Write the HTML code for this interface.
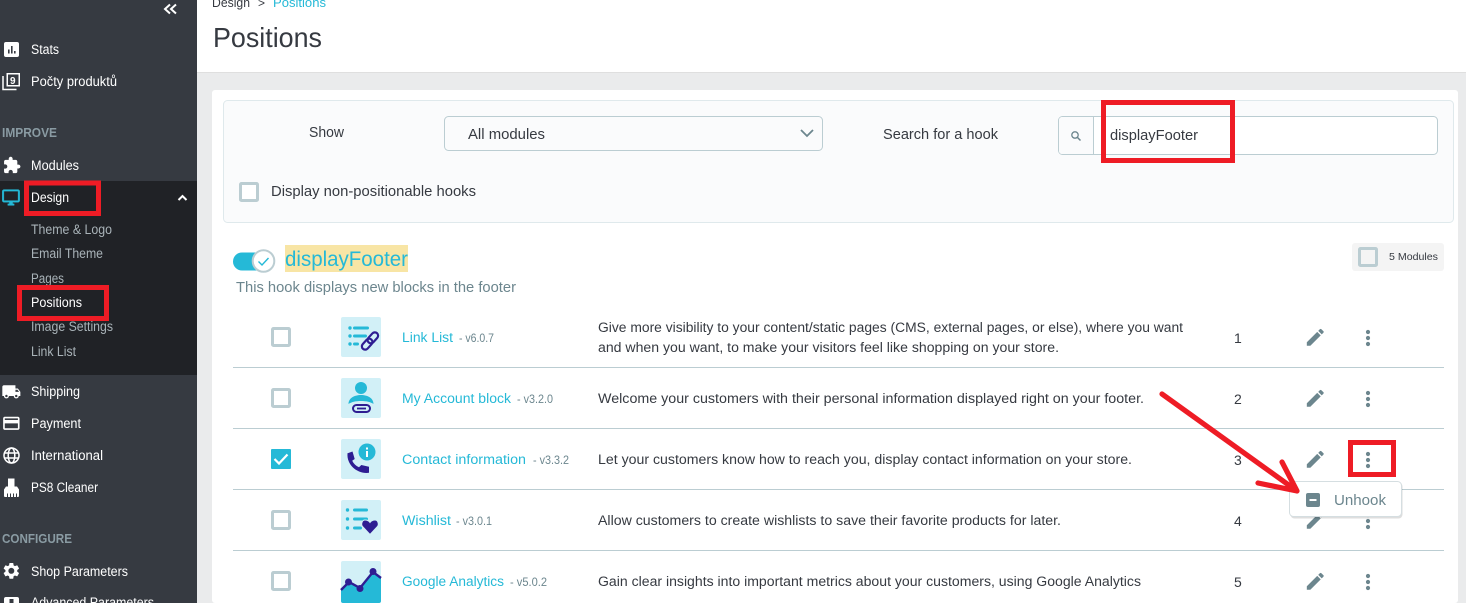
<!DOCTYPE html>
<html><head><meta charset="utf-8"><title>Positions</title>
<style>
html,body{margin:0;padding:0;background:#eaebec;width:1466px;height:603px;overflow:hidden}
svg{display:block;font-family:"Liberation Sans",sans-serif;font-size:13.5px}
.s{fill:#fff}.u{fill:#a9b3b8}.h{fill:#8a9ba3;font-weight:bold;font-size:12.5px}
.d{fill:#363a41}.l{fill:#25b9d7}.v{fill:#6c868e;font-size:11.5px}
.cb{fill:#fff;stroke:#bbcdd2;stroke-width:3}
.r{fill:none;stroke:#ee1c25;stroke-width:5}
.t{fill:#25b9d7}.p{fill:#2e1d92}
</style></head><body>
<svg width="1466" height="603" viewBox="0 0 1466 603" xmlns="http://www.w3.org/2000/svg">
<defs>
<path id="pen" d="M3 17.25V21h3.75L17.81 9.94l-3.75-3.75L3 17.25zM20.71 7.04c.39-.39.39-1.02 0-1.41l-2.34-2.34c-.39-.39-1.02-.39-1.41 0l-1.83 1.83 3.75 3.75 1.83-1.83z"/>
<g id="dots"><circle cx="0" cy="-6" r="2.1"/><circle cx="0" cy="0" r="2.1"/><circle cx="0" cy="6" r="2.1"/></g>
</defs>
<!-- backgrounds -->
<rect x="197" y="0" width="1269" height="72" fill="#fff"/>
<rect x="197" y="72" width="1269" height="1" fill="#dfdfdf"/>
<rect x="212" y="90" width="1246" height="513" rx="3" fill="#fff"/>
<rect x="0" y="0" width="197" height="603" fill="#363a41"/>
<rect x="0" y="181" width="197" height="194" fill="#202226"/>

<!-- sidebar chrome -->
<path d="M170 4.5l-5 4.5 5 4.5M176 4.5l-5 4.5 5 4.5" fill="none" stroke="#fff" stroke-width="2"/>
<path d="M178.5 200l4-4 4 4" fill="none" stroke="#fff" stroke-width="2"/>
<!-- stats -->
<rect x="4" y="42" width="15" height="15" rx="2" fill="#fff"/>
<path d="M8 49.5h1.600v4H8zM11 46h1.600v7.500H11zM14 51h1.600v2.500H14z" fill="#363a41"/>
<!-- filter 9 -->
<path d="M3 76v13.500h13.500" fill="none" stroke="#fff" stroke-width="1.500"/>
<rect x="6.500" y="73" width="13.500" height="13.500" fill="#fff"/>
<rect x="8" y="74.500" width="10.500" height="10.500" fill="#363a41"/>
<text x="10" y="84" font-size="10" font-weight="bold" fill="#fff">9</text>
<!-- puzzle -->
<path transform="translate(2.500 156) scale(.78)" fill="#fff" d="M20.500 11H19V7c0-1.100-.9-2-2-2h-4V3.500C13 2.120 11.880 1 10.500 1S8 2.120 8 3.500V5H4c-1.100 0-1.990.9-1.990 2v3.800H3.500c1.490 0 2.700 1.210 2.700 2.700s-1.210 2.700-2.700 2.700H2V20c0 1.100.9 2 2 2h3.800v-1.500c0-1.490 1.210-2.700 2.700-2.700 1.490 0 2.700 1.210 2.700 2.700V22H17c1.100 0 2-.9 2-2v-4h1.500c1.380 0 2.500-1.120 2.500-2.500S21.880 11 20.500 11z"/>
<!-- desktop -->
<path transform="translate(1.500 188) scale(.79)" fill="#25b9d7" stroke="#25b9d7" stroke-width=".5" d="M21 2H3c-1.100 0-2 .9-2 2v12c0 1.100.9 2 2 2h7v2H8v2h8v-2h-2v-2h7c1.100 0 2-.9 2-2V4c0-1.100-.9-2-2-2zm0 14H3V4h18v12z"/>
<!-- shipping -->
<path transform="translate(1.500 382) scale(.82)" fill="#fff" d="M20 8h-3V4H3c-1.100 0-2 .9-2 2v11h2c0 1.660 1.340 3 3 3s3-1.340 3-3h6c0 1.660 1.340 3 3 3s3-1.340 3-3h2v-5l-3-4zM6 18.500c-.83 0-1.500-.67-1.500-1.500s.67-1.500 1.500-1.500 1.500.67 1.500 1.500-.67 1.500-1.500 1.500zm13.500-9l1.960 2.500H17V9.500h2.500zm-1.500 9c-.83 0-1.500-.67-1.500-1.500s.67-1.500 1.500-1.500 1.500.67 1.500 1.500-.67 1.500-1.500 1.500z"/>
<!-- payment -->
<path transform="translate(1.500 413.500) scale(.82)" fill="#fff" d="M20 4H4c-1.110 0-1.990.89-1.990 2L2 18c0 1.110.89 2 2 2h16c1.110 0 2-.89 2-2V6c0-1.110-.89-2-2-2zm0 14H4v-6h16v6zm0-10H4V6h16v2z"/>
<!-- globe -->
<g fill="none" stroke="#fff" stroke-width="1.500"><circle cx="11.500" cy="455.500" r="7.500"/><ellipse cx="11.500" cy="455.500" rx="3.300" ry="7.500"/><path d="M4.500 453h14M4.500 458h14"/></g>
<!-- brush -->
<path d="M8 478.500h6.500v8h2.500l2 3v6.500a1 1 0 0 1-1 1H5a1 1 0 0 1-1-1v-6.500l2-3h2z" fill="#fff"/>
<path d="M7.500 497v-3.500M10.500 497v-3.500M13.500 497v-3.500M16.500 497v-3.500" stroke="#363a41" stroke-width="1"/>
<!-- gear -->
<path transform="translate(1.500 561) scale(.82)" fill="#fff" d="M19.140 12.940c.04-.3.06-.61.06-.94 0-.32-.02-.64-.07-.94l2.030-1.580c.18-.14.23-.41.12-.61l-1.920-3.320c-.12-.22-.37-.29-.59-.22l-2.390.96c-.5-.38-1.030-.7-1.620-.94l-.36-2.540c-.04-.24-.24-.41-.48-.41h-3.840c-.24 0-.43.17-.47.41l-.36 2.540c-.59.24-1.130.57-1.620.94l-2.390-.96c-.22-.08-.47 0-.59.22L2.740 8.870c-.12.21-.08.47.12.61l2.030 1.580c-.05.3-.09.63-.09.94s.02.64.07.94l-2.030 1.580c-.18.14-.23.41-.12.61l1.920 3.320c.12.22.37.29.59.22l2.390-.96c.5.38 1.030.7 1.620.94l.36 2.540c.05.24.24.41.48.41h3.840c.24 0 .44-.17.47-.41l.36-2.540c.59-.24 1.130-.56 1.620-.94l2.390.96c.22.08.47 0 .59-.22l1.920-3.320c.12-.22.07-.47-.12-.61l-2.010-1.580zM12 15.600c-1.980 0-3.600-1.620-3.600-3.600s1.620-3.600 3.600-3.600 3.600 1.620 3.600 3.600-1.620 3.600-3.600 3.600z"/>
<rect x="4" y="597" width="15" height="12" rx="2" fill="#fff"/>
<rect x="9.500" y="599" width="4" height="4" fill="#363a41"/>

<!-- sidebar text -->
<text class="s" x="31" y="54" textLength="28" lengthAdjust="spacingAndGlyphs">Stats</text>
<text class="s" x="31" y="86" textLength="86" lengthAdjust="spacingAndGlyphs">Počty produktů</text>
<text class="h" x="2" y="137" textLength="55" lengthAdjust="spacingAndGlyphs">IMPROVE</text>
<text class="s" x="31" y="170" textLength="48" lengthAdjust="spacingAndGlyphs">Modules</text>
<text class="s" x="31" y="202" textLength="38" lengthAdjust="spacingAndGlyphs">Design</text>
<text class="u" x="31" y="234" textLength="81" lengthAdjust="spacingAndGlyphs">Theme &amp; Logo</text>
<text class="u" x="31" y="258" textLength="72" lengthAdjust="spacingAndGlyphs">Email Theme</text>
<text class="u" x="31" y="283" textLength="33" lengthAdjust="spacingAndGlyphs">Pages</text>
<text class="s" x="31" y="307" textLength="51" lengthAdjust="spacingAndGlyphs">Positions</text>
<text class="u" x="31" y="331" textLength="82" lengthAdjust="spacingAndGlyphs">Image Settings</text>
<text class="u" x="31" y="356" textLength="45" lengthAdjust="spacingAndGlyphs">Link List</text>
<text class="s" x="31" y="396" textLength="49" lengthAdjust="spacingAndGlyphs">Shipping</text>
<text class="s" x="31" y="428" textLength="50" lengthAdjust="spacingAndGlyphs">Payment</text>
<text class="s" x="31" y="460" textLength="72" lengthAdjust="spacingAndGlyphs">International</text>
<text class="s" x="31" y="492" textLength="67" lengthAdjust="spacingAndGlyphs">PS8 Cleaner</text>
<text class="h" x="2" y="543" textLength="70" lengthAdjust="spacingAndGlyphs">CONFIGURE</text>
<text class="s" x="31" y="576" textLength="97" lengthAdjust="spacingAndGlyphs">Shop Parameters</text>
<text class="s" x="31" y="607" textLength="123" lengthAdjust="spacingAndGlyphs">Advanced Parameters</text>

<!-- header -->
<text class="d" x="212" y="7" font-size="12.500" textLength="38" lengthAdjust="spacingAndGlyphs">Design</text>
<text class="d" x="258" y="7" font-size="12">&gt;</text>
<text class="l" x="273" y="7" font-size="12.500" textLength="53" lengthAdjust="spacingAndGlyphs">Positions</text>
<text class="d" x="213" y="47" font-size="28" textLength="109" lengthAdjust="spacingAndGlyphs">Positions</text>

<!-- filter panel -->
<rect x="223.500" y="100.500" width="1230" height="122" rx="4" fill="#fafbfc" stroke="#dfe9ec"/>
<text class="d" x="309" y="137" font-size="14.500" textLength="35" lengthAdjust="spacingAndGlyphs">Show</text>
<rect x="444.500" y="116.500" width="378" height="34" rx="4" fill="#fafbfc" stroke="#bbcdd2"/>
<text class="d" x="468" y="139" font-size="14.500" textLength="77" lengthAdjust="spacingAndGlyphs">All modules</text>
<path d="M801 130l6 6 6-6" fill="none" stroke="#6c868e" stroke-width="1.800"/>
<text class="d" x="883" y="139" font-size="14.500" textLength="115" lengthAdjust="spacingAndGlyphs">Search for a hook</text>
<rect x="1058.500" y="116.500" width="379" height="38" rx="4" fill="#fff" stroke="#bbcdd2"/>
<path d="M1059 120a3 3 0 0 1 3-3h31v37h-31a3 3 0 0 1-3-3z" fill="#fafbfc"/>
<path d="M1093.500 117v37" stroke="#bbcdd2"/>
<circle cx="1075" cy="135" r="3.200" fill="none" stroke="#6c868e" stroke-width="1.300"/>
<path d="M1077.500 137.500l3 3" stroke="#6c868e" stroke-width="1.500"/>
<text class="d" x="1110" y="140" font-size="14.500" textLength="88" lengthAdjust="spacingAndGlyphs">displayFooter</text>
<rect class="cb" x="240.500" y="183.500" width="17" height="17" rx="1"/>
<text class="d" x="271" y="196" font-size="14.500" textLength="205" lengthAdjust="spacingAndGlyphs">Display non-positionable hooks</text>

<!-- hook header -->
<rect x="233" y="252.500" width="36" height="18" rx="9" fill="#25b9d7"/>
<circle cx="263.500" cy="261" r="10.800" fill="#fff" stroke="#bbcdd2" stroke-width="2"/>
<path d="M258.500 261.500l3.500 3.500 6.500-7" fill="none" stroke="#25b9d7" stroke-width="1.400"/>
<rect x="285" y="245" width="123" height="27" fill="#f8e5a5"/>
<text class="l" x="285" y="266" font-size="21.500" textLength="123" lengthAdjust="spacingAndGlyphs">displayFooter</text>
<text x="236" y="292" font-size="14.500" fill="#6c868e" textLength="280" lengthAdjust="spacingAndGlyphs">This hook displays new blocks in the footer</text>
<rect x="1352" y="243" width="92" height="28" rx="3" fill="#f4f4f4"/>
<rect x="1359.500" y="248.500" width="17" height="17" rx="1" fill="#f4f4f4" stroke="#bbcdd2" stroke-width="3"/>
<text class="d" x="1389" y="260" font-size="10.500" textLength="49" lengthAdjust="spacingAndGlyphs">5 Modules</text>

<!-- separators -->
<path d="M233 367.500h1211M233 428.500h1211M233 489.500h1211M233 550.500h1211" stroke="#bbcdd2"/>

<!-- checkboxes -->
<rect class="cb" x="272.500" y="328.500" width="17" height="17" rx="1"/>
<rect class="cb" x="272.500" y="389.500" width="17" height="17" rx="1"/>
<rect x="271" y="449" width="20" height="20" rx="1" fill="#25b9d7"/>
<path d="M274.500 459l4.500 4.500 8.500-9" fill="none" stroke="#fff" stroke-width="2.200"/>
<rect class="cb" x="272.500" y="511.500" width="17" height="17" rx="1"/>
<rect class="cb" x="272.500" y="572.500" width="17" height="17" rx="1"/>

<!-- module icons -->
<rect x="341" y="317" width="40" height="40" rx="2" fill="#d2f0f7"/>
<g class="t"><circle cx="350" cy="328" r="1.700"/><circle cx="350" cy="336" r="1.700"/><circle cx="350" cy="344" r="1.700"/><rect x="353" y="326.500" width="16" height="3" rx="1.500"/><rect x="353" y="334.500" width="14" height="3" rx="1.500"/><rect x="353" y="342.500" width="6" height="3" rx="1.500"/></g>
<g fill="none" stroke="#2e1d92" stroke-width="2.200" transform="translate(370 341) rotate(-48)"><rect x="-10.500" y="-3.300" width="12.500" height="6.600" rx="3.300"/><rect x="-2" y="-3.300" width="12.500" height="6.600" rx="3.300"/></g>

<rect x="341" y="378" width="40" height="40" rx="2" fill="#d2f0f7"/>
<circle cx="361" cy="388" r="6" class="t"/>
<path d="M348.500 404c0-6 6-9 12.500-9s12.500 3 12.500 9c-3-2-7-3-12.500-3s-9.500 1-12.500 3z" class="t"/>
<rect x="353" y="405" width="17" height="7" rx="3.500" fill="none" stroke="#2e1d92" stroke-width="2"/>
<path d="M357 408.500h9" stroke="#2e1d92" stroke-width="1.800"/>

<rect x="341" y="439" width="40" height="40" rx="2" fill="#d2f0f7"/>
<circle cx="367" cy="452" r="8.500" class="t"/>
<rect x="366" y="451" width="2" height="6" fill="#fff"/><rect x="366" y="447.500" width="2" height="2" fill="#fff"/>
<path d="M347 453.500l5.500-2 2.200 7.500-2.500 1.700c1.500 3 3.700 5.200 6.800 6.500l2.300-2.200 7.700 1.800v6c-11 1.500-22.500-7.500-21.500-19.300z" class="p"/>

<rect x="341" y="500" width="40" height="40" rx="2" fill="#d2f0f7"/>
<g class="t"><circle cx="347.500" cy="510" r="1.700"/><circle cx="347.500" cy="519" r="1.700"/><circle cx="347.500" cy="528" r="1.700"/><rect x="353" y="508.500" width="15" height="3" rx="1.500"/><rect x="353" y="517.500" width="15" height="3" rx="1.500"/><rect x="353" y="526.500" width="9" height="3" rx="1.500"/></g>
<path d="M370 534.500l-7-7.500c-2.500-2.500-1-7 2-7 2 0 4 1 5 2.500 1-1.500 3-2.500 5-2.500 3 0 4.500 4.500 2 7z" class="p" stroke="#d2f0f7"/>

<rect x="341" y="561" width="40" height="40" rx="2" fill="#d2f0f7"/>
<path d="M341 590l8-8 11 6 13-16 8 6v23a2 2 0 0 1-2 2h-36a2 2 0 0 1-2-2z" class="t"/>
<path d="M341 590l8-8 11 6 13-16 8 6" fill="none" stroke="#2e1d92" stroke-width="2.400"/>
<circle cx="348.500" cy="582" r="3.500" class="p"/><circle cx="360" cy="588.500" r="3.500" class="p"/><circle cx="373" cy="571.500" r="3.500" class="p"/>

<!-- names -->
<text class="l" x="402" y="342" textLength="51" lengthAdjust="spacingAndGlyphs">Link List</text>
<text class="v" x="459" y="342" textLength="35" lengthAdjust="spacingAndGlyphs">- v6.0.7</text>
<text class="l" x="402" y="403" textLength="109" lengthAdjust="spacingAndGlyphs">My Account block</text>
<text class="v" x="517" y="403" textLength="36" lengthAdjust="spacingAndGlyphs">- v3.2.0</text>
<text class="l" x="402" y="464" textLength="124" lengthAdjust="spacingAndGlyphs">Contact information</text>
<text class="v" x="533" y="464" textLength="36" lengthAdjust="spacingAndGlyphs">- v3.3.2</text>
<text class="l" x="402" y="525" textLength="49" lengthAdjust="spacingAndGlyphs">Wishlist</text>
<text class="v" x="456" y="525" textLength="36" lengthAdjust="spacingAndGlyphs">- v3.0.1</text>
<text class="l" x="402" y="586" textLength="102" lengthAdjust="spacingAndGlyphs">Google Analytics</text>
<text class="v" x="510" y="586" textLength="37" lengthAdjust="spacingAndGlyphs">- v5.0.2</text>

<!-- descriptions -->
<text class="d" x="598" y="332" textLength="585" lengthAdjust="spacingAndGlyphs">Give more visibility to your content/static pages (CMS, external pages, or else), where you want</text>
<text class="d" x="598" y="352" textLength="461" lengthAdjust="spacingAndGlyphs">and when you want, to make your visitors feel like shopping on your store.</text>
<text class="d" x="598" y="403" textLength="546" lengthAdjust="spacingAndGlyphs">Welcome your customers with their personal information displayed right on your footer.</text>
<text class="d" x="598" y="464" textLength="534" lengthAdjust="spacingAndGlyphs">Let your customers know how to reach you, display contact information on your store.</text>
<text class="d" x="598" y="525" textLength="463" lengthAdjust="spacingAndGlyphs">Allow customers to create wishlists to save their favorite products for later.</text>
<text class="d" x="598" y="586" textLength="543" lengthAdjust="spacingAndGlyphs">Gain clear insights into important metrics about your customers, using Google Analytics</text>

<!-- numbers -->
<g class="d" font-size="14"><text x="1234" y="343">1</text><text x="1234" y="404">2</text><text x="1234" y="465">3</text><text x="1234" y="526">4</text><text x="1234" y="587">5</text></g>

<!-- actions -->
<g fill="#6c868e">
<use href="#pen" transform="translate(1304 326) scale(.94)"/>
<use href="#pen" transform="translate(1304 387) scale(.94)"/>
<use href="#pen" transform="translate(1304 448) scale(.94)"/>
<use href="#pen" transform="translate(1304 509) scale(.94)"/>
<use href="#pen" transform="translate(1304 570) scale(.94)"/>
<use href="#dots" transform="translate(1368 338)"/>
<use href="#dots" transform="translate(1368 399)"/>
<use href="#dots" transform="translate(1368 460)"/>
<use href="#dots" transform="translate(1368 521)"/>
<use href="#dots" transform="translate(1368 582)"/>
</g>

<!-- popup -->
<rect x="1290.500" y="482.500" width="112" height="36" rx="4" fill="#000" opacity=".13"/>
<rect x="1289.500" y="481.500" width="112" height="35" rx="4" fill="#fff" stroke="#d5dee1"/>
<rect x="1306" y="493" width="14" height="14" rx="2" fill="#6c868e"/>
<rect x="1309.500" y="499" width="7" height="2" fill="#fff"/>
<text x="1334" y="505" font-size="14.500" fill="#6c868e" textLength="52" lengthAdjust="spacingAndGlyphs">Unhook</text>

<!-- red annotations -->
<rect class="r" x="26.500" y="183" width="72" height="30.500"/>
<rect class="r" x="19.500" y="287.500" width="87" height="31"/>
<rect class="r" x="1103.500" y="102.500" width="129" height="58"/>
<rect class="r" x="1350.500" y="442.500" width="43" height="32"/>
<path d="M1162 394L1297 491M1258 483L1297 491M1282 462L1297 491" fill="none" stroke="#ee1c25" stroke-width="5.200" stroke-linecap="round"/>
</svg>
</body></html>
